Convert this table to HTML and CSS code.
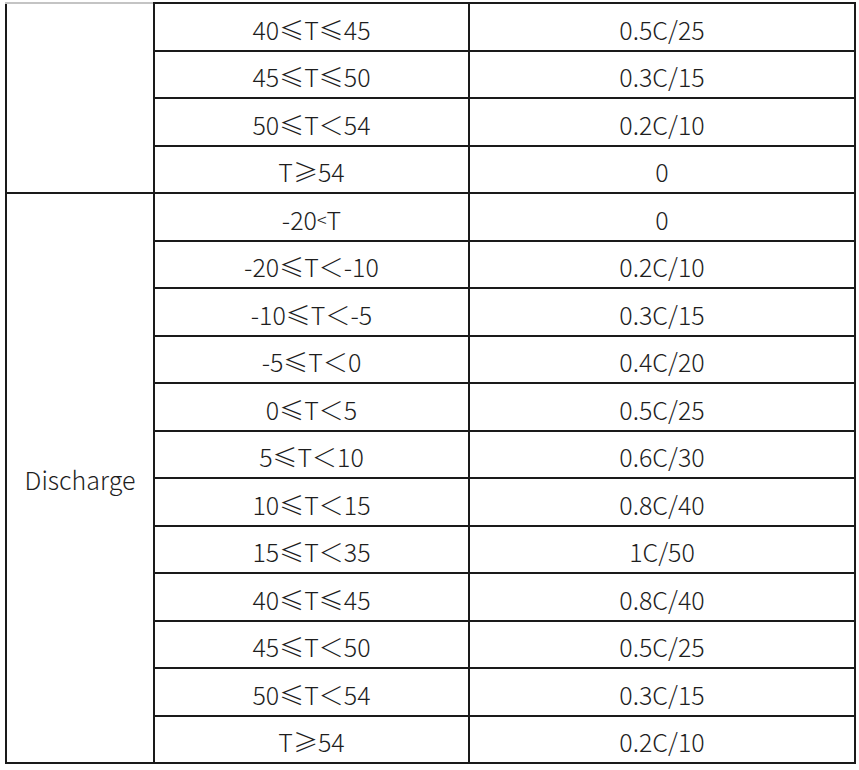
FILE: index.html
```html
<!DOCTYPE html>
<html>
<head>
<meta charset="utf-8">
<link rel="stylesheet" href="styles.css">
</head>
<body>
<table class="grid">
  <colgroup><col class="c1"><col class="c2"><col class="c3"></colgroup>
  <tbody>
    <tr><td class="label top" rowspan="4"></td><td>40≤T≤45</td><td>0.5C/25</td></tr>
    <tr><td>45≤T≤50</td><td>0.3C/15</td></tr>
    <tr><td>50≤T＜54</td><td>0.2C/10</td></tr>
    <tr><td>T≥54</td><td>0</td></tr>
    <tr><td class="label" rowspan="12">Discharge</td><td>-20<span class="lt">&lt;</span>T</td><td>0</td></tr>
    <tr><td>-20≤T＜-10</td><td>0.2C/10</td></tr>
    <tr><td>-10≤T＜-5</td><td>0.3C/15</td></tr>
    <tr><td>-5≤T＜0</td><td>0.4C/20</td></tr>
    <tr><td>0≤T＜5</td><td>0.5C/25</td></tr>
    <tr><td>5≤T＜10</td><td>0.6C/30</td></tr>
    <tr><td>10≤T＜15</td><td>0.8C/40</td></tr>
    <tr><td>15≤T＜35</td><td>1C/50</td></tr>
    <tr><td>40≤T≤45</td><td>0.8C/40</td></tr>
    <tr><td>45≤T＜50</td><td>0.5C/25</td></tr>
    <tr><td>50≤T＜54</td><td>0.3C/15</td></tr>
    <tr><td>T≥54</td><td>0.2C/10</td></tr>
  </tbody>
</table>
</body>
</html>
```
FILE: styles.css
```css
html, body {
  margin: 0;
  padding: 0;
  background: #fff;
}
body {
  padding: 2px 0 0 5px;
  font-family: "Noto Sans CJK SC", "Noto Sans", sans-serif;
  font-weight: 300;
  color: #1e1e1e;
}
.grid {
  border-collapse: collapse;
  table-layout: fixed;
  width: 849px;
}
.c1 { width: 148px; }
.c2 { width: 315px; }
.c3 { width: 386px; }
.grid td {
  border: 2px solid #1a1a1a;
  height: 40.5px;
  padding: 5px 0 0;
  text-align: center;
  vertical-align: middle;
  font-size: 25px;
  line-height: 1;
}
.grid td.label {
  font-size: 25px;
  padding-top: 2px;
}
.grid td.top {
  border-top-color: #c4c4c4;
}
.lt {
  font-size: 18px;
  vertical-align: 3px;
}
```
